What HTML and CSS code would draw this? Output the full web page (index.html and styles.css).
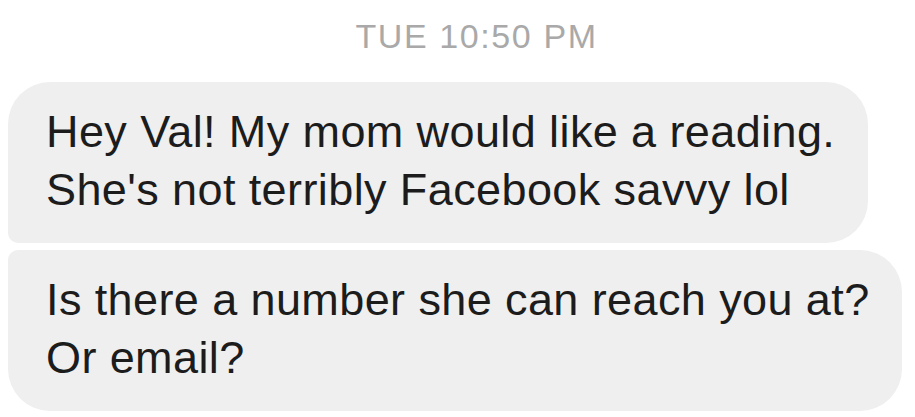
FILE: index.html
```html
<!DOCTYPE html>
<html>
<head>
<meta charset="utf-8">
<link rel="stylesheet" href="styles.css">
</head>
<body>
<div class="thread">
  <div class="stamp">TUE 10:50 PM</div>
  <div class="msgs">
    <div class="bubble first">Hey Val! My mom would like a reading.<br>She's not terribly Facebook savvy lol</div>
    <div class="bubble last">Is there a number she can reach you at?<br>Or email?</div>
  </div>
</div>
</body>
</html>
```
FILE: styles.css
```css
html, body {
  margin: 0;
  background: #ffffff;
}
.thread {
  width: 915px;
  height: 417px;
  overflow: hidden;
  font-family: "Liberation Sans", Arial, sans-serif;
}
.stamp {
  padding: 20px 0 0 38px;
  height: 82px;
  box-sizing: border-box;
  text-align: center;
  color: #a9a9a9;
  font-size: 34px;
  line-height: 33px;
  letter-spacing: 1.6px;
}
.msgs {
  display: flex;
  flex-direction: column;
  align-items: flex-start;
  gap: 7px;
  padding-left: 8px;
}
.bubble {
  background: #efefef;
  color: #1c1c1c;
  font-size: 45px;
  line-height: 58px;
  letter-spacing: 0.4px;
  padding: 21px 0 0 38px;
  box-sizing: border-box;
  height: 161px;
  white-space: nowrap;
}
.first {
  width: 860px;
  border-radius: 42px 42px 42px 10px;
}
.last {
  width: 894px;
  border-radius: 10px 42px 42px 42px;
}
```
